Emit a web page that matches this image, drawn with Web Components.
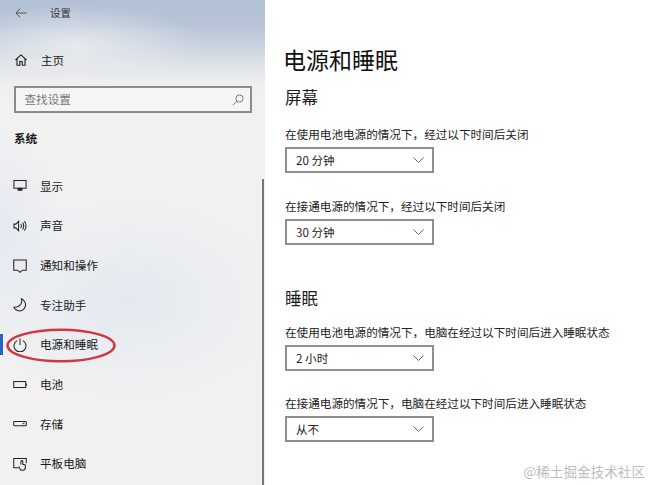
<!DOCTYPE html>
<html lang="zh">
<head>
<meta charset="utf-8">
<title>设置</title>
<style>
    html, body { margin: 0; height: 100%; overflow: hidden; }
    body { font-family: "Noto Sans CJK SC", "Liberation Sans", sans-serif; color: #1a1a1a; }
</style>
</head>
<body>
<settings-app>
    <settings-sidebar slot="side">
        <nav-item label="显示" icon="display"></nav-item>
        <nav-item label="声音" icon="sound"></nav-item>
        <nav-item label="通知和操作" icon="notify"></nav-item>
        <nav-item label="专注助手" icon="moon"></nav-item>
        <nav-item label="电源和睡眠" icon="power" active></nav-item>
        <nav-item label="电池" icon="battery"></nav-item>
        <nav-item label="存储" icon="storage"></nav-item>
        <nav-item label="平板电脑" icon="tablet"></nav-item>
    </settings-sidebar>
    <power-panel slot="main">
        <section-title>屏幕</section-title>
        <setting-select label="在使用电池电源的情况下，经过以下时间后关闭" value="20 分钟"></setting-select>
        <setting-select label="在接通电源的情况下，经过以下时间后关闭" value="30 分钟"></setting-select>
        <section-title class="sleep">睡眠</section-title>
        <setting-select label="在使用电池电源的情况下，电脑在经过以下时间后进入睡眠状态" value="2 小时"></setting-select>
        <setting-select label="在接通电源的情况下，电脑在经过以下时间后进入睡眠状态" value="从不"></setting-select>
    </power-panel>
</settings-app>

<script>
const ICONS = {
    display: `<path d="M1 1.500h13v8.500h-13z"/><path d="M5 11.800h5" stroke-width="1.400"/><path d="M5.500 10h4v1.500h-4z" fill="currentColor"/>`,
    sound: `<path d="M1 5.500h2l3-3v10l-3-3h-2z"/><path d="M8.300 5.500c.8 1.200.8 2.800 0 4M10.300 3.800c1.400 2.200 1.400 5.200 0 7.400M12.300 2.500c2 3 2 7 0 10"/>`,
    notify: `<path d="M.8 1h13.400v11h-4l-2.700 2.300-2.700-2.300h-4z"/>`,
    moon: `<path d="M9 .8c1.500 5-2 9.500-8 9.200 1.300 3.300 5.800 5 9.200 3 3.400-2 4-6.200 2.300-9-.8-1.400-2-2.600-3.500-3.200z"/>`,
    power: `<path d="M4.500 2.800a6.400 6.400 0 1 0 6 0"/><path d="M7.500 .6v6.900"/>`,
    battery: `<rect x=".8" y="3.800" width="12.800" height="6.400"/><path d="M14.600 5.800v2.400"/>`,
    storage: `<rect x=".8" y="4.800" width="13.400" height="4.600" rx=".8"/><path d="M10.300 7.100h2"/>`,
    tablet: `<path d="M6 11.500h-5.200v-9.800h13.400v5"/><path d="M8.500 8V4.800a1 1 0 0 1 2 0v3l2.700.7v2.800c0 1.800-1.100 3-2.900 3s-2.600-.8-3.100-2l-1-2.300"/>`
};

class SettingsApp extends HTMLElement {
    connectedCallback() {
        this.attachShadow({ mode: "open" }).innerHTML = `
            <style>
                :host {
                    display: flex;
                    width: 650px;
                    height: 485px;
                    overflow: hidden;
                    position: relative;
                }
                .mark {
                    position: absolute;
                    right: 5px;
                    bottom: 4px;
                    font-size: 13.600px;
                    line-height: 20px;
                    color: #bdbdbd;
                    white-space: nowrap;
                }
            </style>
            <slot name="side"></slot>
            <slot name="main"></slot>
            <div class="mark">@稀土掘金技术社区</div>
        `;
    }
}

class SettingsSidebar extends HTMLElement {
    connectedCallback() {
        this.attachShadow({ mode: "open" }).innerHTML = `
            <style>
                :host {
                    display: block;
                    flex: 0 0 265px;
                    height: 485px;
                    box-sizing: border-box;
                    position: relative;
                    overflow: hidden;
                    font-size: 11.600px;
                    background:
                        radial-gradient(ellipse 130px 40px at 75px 45px, rgba(240,241,243,.75), rgba(240,241,243,0)),
                        radial-gradient(ellipse 170px 110px at 130px 300px, rgba(222,230,240,.7), rgba(222,230,240,0)),
                        radial-gradient(ellipse 60px 110px at 0 230px, rgba(225,232,243,.8), rgba(225,232,243,0)),
                        linear-gradient(#b3c1d6 0, #b7c4d7 25px, #c8d1de 45px, #dfe3e8 65px, #eeeff0 85px, #f1f1f1 110px);
                }
                header {
                    display: flex;
                    align-items: center;
                    height: 26px;
                    padding-left: 15px;
                    color: #333;
                }
                header svg { width: 12px; height: 10px; margin-right: 25px; }
                header span { font-size: 10.400px; margin-left: -2px; line-height: 14px; }
                .home {
                    display: flex;
                    align-items: center;
                    height: 24px;
                    margin-top: 22px;
                    padding-left: 15px;
                    gap: 14px;
                }
                .home svg { width: 12px; height: 12px; }
                .search {
                    display: flex;
                    align-items: center;
                    justify-content: space-between;
                    box-sizing: border-box;
                    width: 238px;
                    height: 27px;
                    margin: 14px 0 0 13.500px;
                    padding: 0 6px 0 9px;
                    border: 2px solid #8b8b8b;
                    background: #f5f5f5;
                    color: #777;
                }
                .search span { margin-top: -2px; }
                .search svg { width: 12px; height: 12px; }
                h3 {
                    margin: 15px 0 0 14px;
                    font-size: 11.600px;
                    line-height: 20px;
                    font-weight: 700;
                }
                .list { margin-top: 18.500px; }
                .scroll {
                    position: absolute;
                    left: 262px;
                    top: 179px;
                    bottom: 0;
                    width: 2px;
                    background: #777;
                }
                .ring {
                    position: absolute;
                    left: 6px;
                    top: 328px;
                    width: 110px;
                    height: 35px;
                }
            </style>
            <header>
                <svg viewBox="0 0 12 10" fill="none" stroke="#555" stroke-width="1"><path d="M5 .7 1 5l4 4.300M1 5h10.500"/></svg>
                <span>设置</span>
            </header>
            <div class="home">
                <svg viewBox="0 0 12 12" fill="none" stroke="#222" stroke-width="1.100"><path d="M.5 6 6 .9 11.500 6M2 4.800v6.500h2.800V7.500h2.400v3.800H10V4.800"/></svg>
                <span>主页</span>
            </div>
            <div class="search">
                <span>查找设置</span>
                <svg viewBox="0 0 12 12" fill="none" stroke="#777" stroke-width="1"><circle cx="7.500" cy="4.500" r="3.600"/><path d="M5 7 .8 11.200"/></svg>
            </div>
            <h3>系统</h3>
            <div class="list"><slot></slot></div>
            <div class="scroll"></div>
            <svg class="ring" viewBox="0 0 110 35" fill="none" stroke="#cf383f" stroke-width="2.500"><ellipse cx="55" cy="17.500" rx="53.500" ry="15.800"/></svg>
        `;
    }
}

class NavItem extends HTMLElement {
    connectedCallback() {
        const icon = ICONS[this.getAttribute("icon")] || "";
        this.attachShadow({ mode: "open" }).innerHTML = `
            <style>
                :host {
                    display: flex;
                    align-items: center;
                    height: 39.650px;
                    padding-left: 13px;
                    gap: 13px;
                    position: relative;
                }
                :host([active])::before {
                    content: "";
                    position: absolute;
                    left: 0;
                    top: 9px;
                    width: 3px;
                    height: 21px;
                    background: #2a62c4;
                }
                svg { width: 14px; height: 14px; color: #222; flex: none; }
                span { margin-top: -1px; }
            </style>
            <svg viewBox="0 0 15 15" fill="none" stroke="currentColor" stroke-width="1.100">${icon}</svg>
            <span>${this.getAttribute("label")}</span>
        `;
    }
}

class PowerPanel extends HTMLElement {
    connectedCallback() {
        this.attachShadow({ mode: "open" }).innerHTML = `
            <style>
                :host {
                    display: block;
                    flex: 1;
                    height: 485px;
                    box-sizing: border-box;
                    padding: 43px 0 0 20px;
                    background: #fff;
                }
                h1 {
                    margin: -1px 0 9px -2px;
                    font-size: 23px;
                    line-height: 34px;
                    font-weight: 400;
                    color: #111;
                }
            </style>
            <h1>电源和睡眠</h1>
            <slot></slot>
        `;
    }
}

class SectionTitle extends HTMLElement {
    connectedCallback() {
        this.attachShadow({ mode: "open" }).innerHTML = `
            <style>
                :host {
                    display: block;
                    font-size: 16.500px;
                    line-height: 24px;
                    color: #1c1c1c;
                    margin-bottom: 16px;
                }
                :host(.sleep) { margin-top: 41px; margin-bottom: 13px; }
            </style>
            <slot></slot>
        `;
    }
}

class SettingSelect extends HTMLElement {
    connectedCallback() {
        this.attachShadow({ mode: "open" }).innerHTML = `
            <style>
                :host {
                    display: block;
                    font-size: 11.600px;
                    margin-bottom: 23.500px;
                }
                label { display: block; line-height: 18px; margin-bottom: 4px; color: #222; white-space: nowrap; }
                .box {
                    display: flex;
                    align-items: center;
                    justify-content: space-between;
                    box-sizing: border-box;
                    width: 149px;
                    height: 26px;
                    padding: 0 8px 0 9px;
                    border: 2px solid #8f8f8f;
                    color: #222;
                }
                svg { width: 11px; height: 6px; }
            </style>
            <label>${this.getAttribute("label")}</label>
            <div class="box">
                <span>${this.getAttribute("value")}</span>
                <svg viewBox="0 0 11 6" fill="none" stroke="#666" stroke-width="1"><path d="M.5.5l5 5 5-5"/></svg>
            </div>
        `;
    }
}

customElements.define("settings-app", SettingsApp);
customElements.define("settings-sidebar", SettingsSidebar);
customElements.define("nav-item", NavItem);
customElements.define("power-panel", PowerPanel);
customElements.define("section-title", SectionTitle);
customElements.define("setting-select", SettingSelect);
</script>
</body>
</html>
